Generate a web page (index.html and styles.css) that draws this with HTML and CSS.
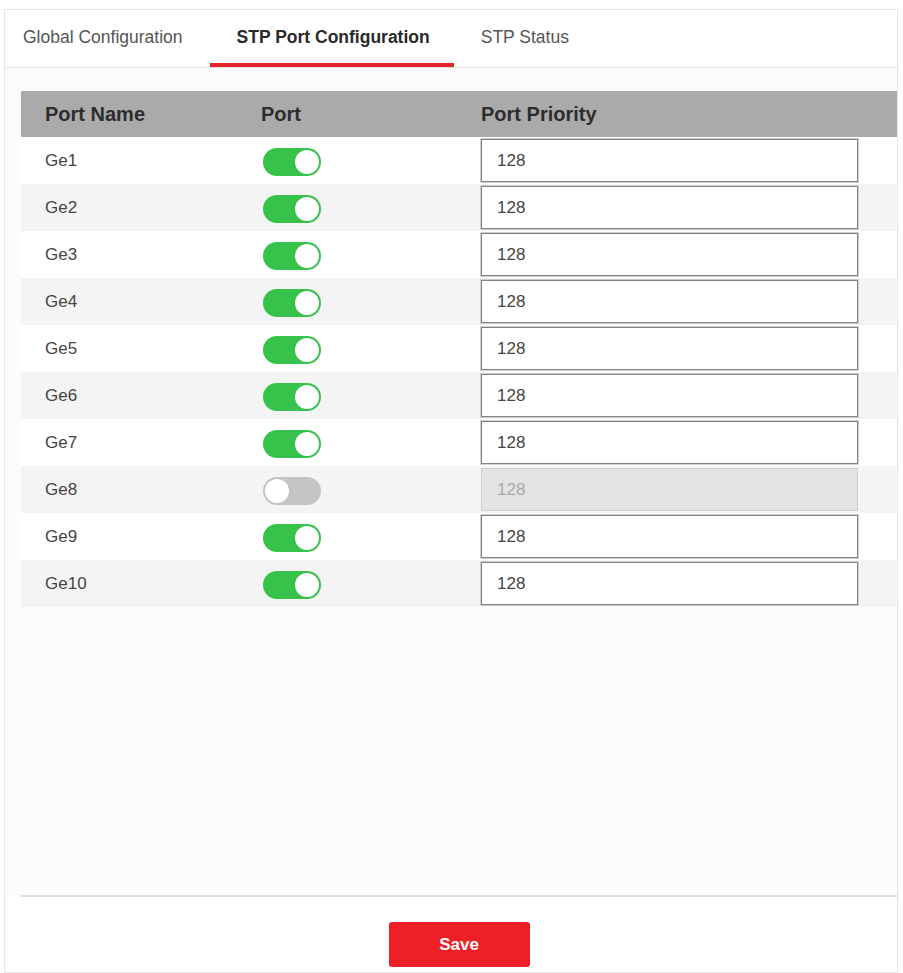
FILE: index.html
```html
<!DOCTYPE html>
<html lang="en">
<head>
<meta charset="utf-8">
<title>STP Port Configuration</title>
<link rel="stylesheet" href="styles.css">
</head>
<body>
<div class="frame">
  <div class="tabs">
    <div class="tab first">Global Configuration</div>
    <div class="tab active">STP Port Configuration</div>
    <div class="tab">STP Status</div>
  </div>
  <div class="main">
    <div class="table">
      <div class="row head">
        <div class="c1">Port Name</div>
        <div class="c2">Port</div>
        <div class="c3">Port Priority</div>
      </div>
      <div class="row"><div class="c1">Ge1</div><div class="c2"><span class="toggle on"></span></div><div class="c3"><input class="prio" value="128"></div></div>
      <div class="row"><div class="c1">Ge2</div><div class="c2"><span class="toggle on"></span></div><div class="c3"><input class="prio" value="128"></div></div>
      <div class="row"><div class="c1">Ge3</div><div class="c2"><span class="toggle on"></span></div><div class="c3"><input class="prio" value="128"></div></div>
      <div class="row"><div class="c1">Ge4</div><div class="c2"><span class="toggle on"></span></div><div class="c3"><input class="prio" value="128"></div></div>
      <div class="row"><div class="c1">Ge5</div><div class="c2"><span class="toggle on"></span></div><div class="c3"><input class="prio" value="128"></div></div>
      <div class="row"><div class="c1">Ge6</div><div class="c2"><span class="toggle on"></span></div><div class="c3"><input class="prio" value="128"></div></div>
      <div class="row"><div class="c1">Ge7</div><div class="c2"><span class="toggle on"></span></div><div class="c3"><input class="prio" value="128"></div></div>
      <div class="row"><div class="c1">Ge8</div><div class="c2"><span class="toggle"></span></div><div class="c3"><input class="prio" value="128" disabled></div></div>
      <div class="row"><div class="c1">Ge9</div><div class="c2"><span class="toggle on"></span></div><div class="c3"><input class="prio" value="128"></div></div>
      <div class="row"><div class="c1">Ge10</div><div class="c2"><span class="toggle on"></span></div><div class="c3"><input class="prio" value="128"></div></div>
    </div>
  </div>
  <div class="footer">
    <button class="save">Save</button>
  </div>
</div>
</body>
</html>
```
FILE: styles.css
```css
html, body {
  margin: 0;
  padding: 0;
  background: #ffffff;
}
body {
  font-family: "Liberation Sans", Arial, sans-serif;
  color: #333;
}
.frame {
  box-sizing: border-box;
  margin: 9px 0 0 4px;
  width: 894px;
  height: 964px;
  border: 1px solid #e6e6e6;
  display: flex;
  flex-direction: column;
  background: #fff;
}
.tabs {
  display: flex;
  height: 57px;
  padding-left: 18px;
  border-bottom: 1px solid #e2e2e2;
  flex: none;
}
.tab {
  position: relative;
  padding: 0 27px;
  font-size: 17.5px;
  line-height: 54px;
  color: #555;
}
.tab.first {
  padding-left: 0;
}
.tab.active {
  font-weight: bold;
  color: #2a2a2a;
  padding: 0 24px 0 27px;
}
.tab.active::after {
  content: "";
  position: absolute;
  left: 0;
  right: 0;
  bottom: 0;
  height: 4px;
  background: #e2222b;
}
.main {
  flex: 1;
  padding: 23px 0 0 16px;
  background: #fcfcfc;
}
.table {
  display: flex;
  flex-direction: column;
}
.row {
  display: grid;
  grid-template-columns: 240px 220px 1fr;
  align-items: center;
  height: 47px;
  background: #ffffff;
  font-size: 17px;
  color: #444;
}
.row:nth-child(odd) {
  background: #f4f4f4;
}
.row.head {
  height: 46px;
  background: #aaaaaa;
  font-size: 20px;
  font-weight: bold;
  color: #2d2d2d;
}
.c1 {
  padding-left: 24px;
}
.c2 {
  display: flex;
  align-items: center;
}
.toggle {
  display: block;
  position: relative;
  margin-left: 2px;
  margin-top: 3px;
  width: 58px;
  height: 28px;
  border-radius: 14px;
  background: #c4c4c4;
}
.toggle::after {
  content: "";
  position: absolute;
  top: 2px;
  left: 2px;
  width: 24px;
  height: 24px;
  border-radius: 50%;
  background: #fff;
}
.toggle.on {
  background: #36c24b;
}
.toggle.on::after {
  left: auto;
  right: 2px;
}
.prio {
  box-sizing: border-box;
  display: block;
  width: 377px;
  height: 43px;
  margin: 0;
  padding: 0 15px;
  border: 1px solid #828282;
  box-shadow: 0 0 0 1px #cfcfcf;
  background: #fff;
  font-family: "Liberation Sans", Arial, sans-serif;
  font-size: 17px;
  color: #444;
  outline: none;
}
.prio:disabled {
  background: #e3e3e3;
  border-color: #cfcfcf;
  box-shadow: none;
  color: #aaa;
}
.footer {
  flex: none;
  margin-left: 16px;
  border-top: 2px solid #dcdcdc;
  padding: 25px 0 5px;
  display: flex;
  justify-content: center;
}
.save {
  width: 141px;
  height: 45px;
  border: none;
  border-radius: 3px;
  background: #ee1f27;
  color: #fff;
  font-family: "Liberation Sans", Arial, sans-serif;
  font-size: 17px;
  font-weight: bold;
}
```
